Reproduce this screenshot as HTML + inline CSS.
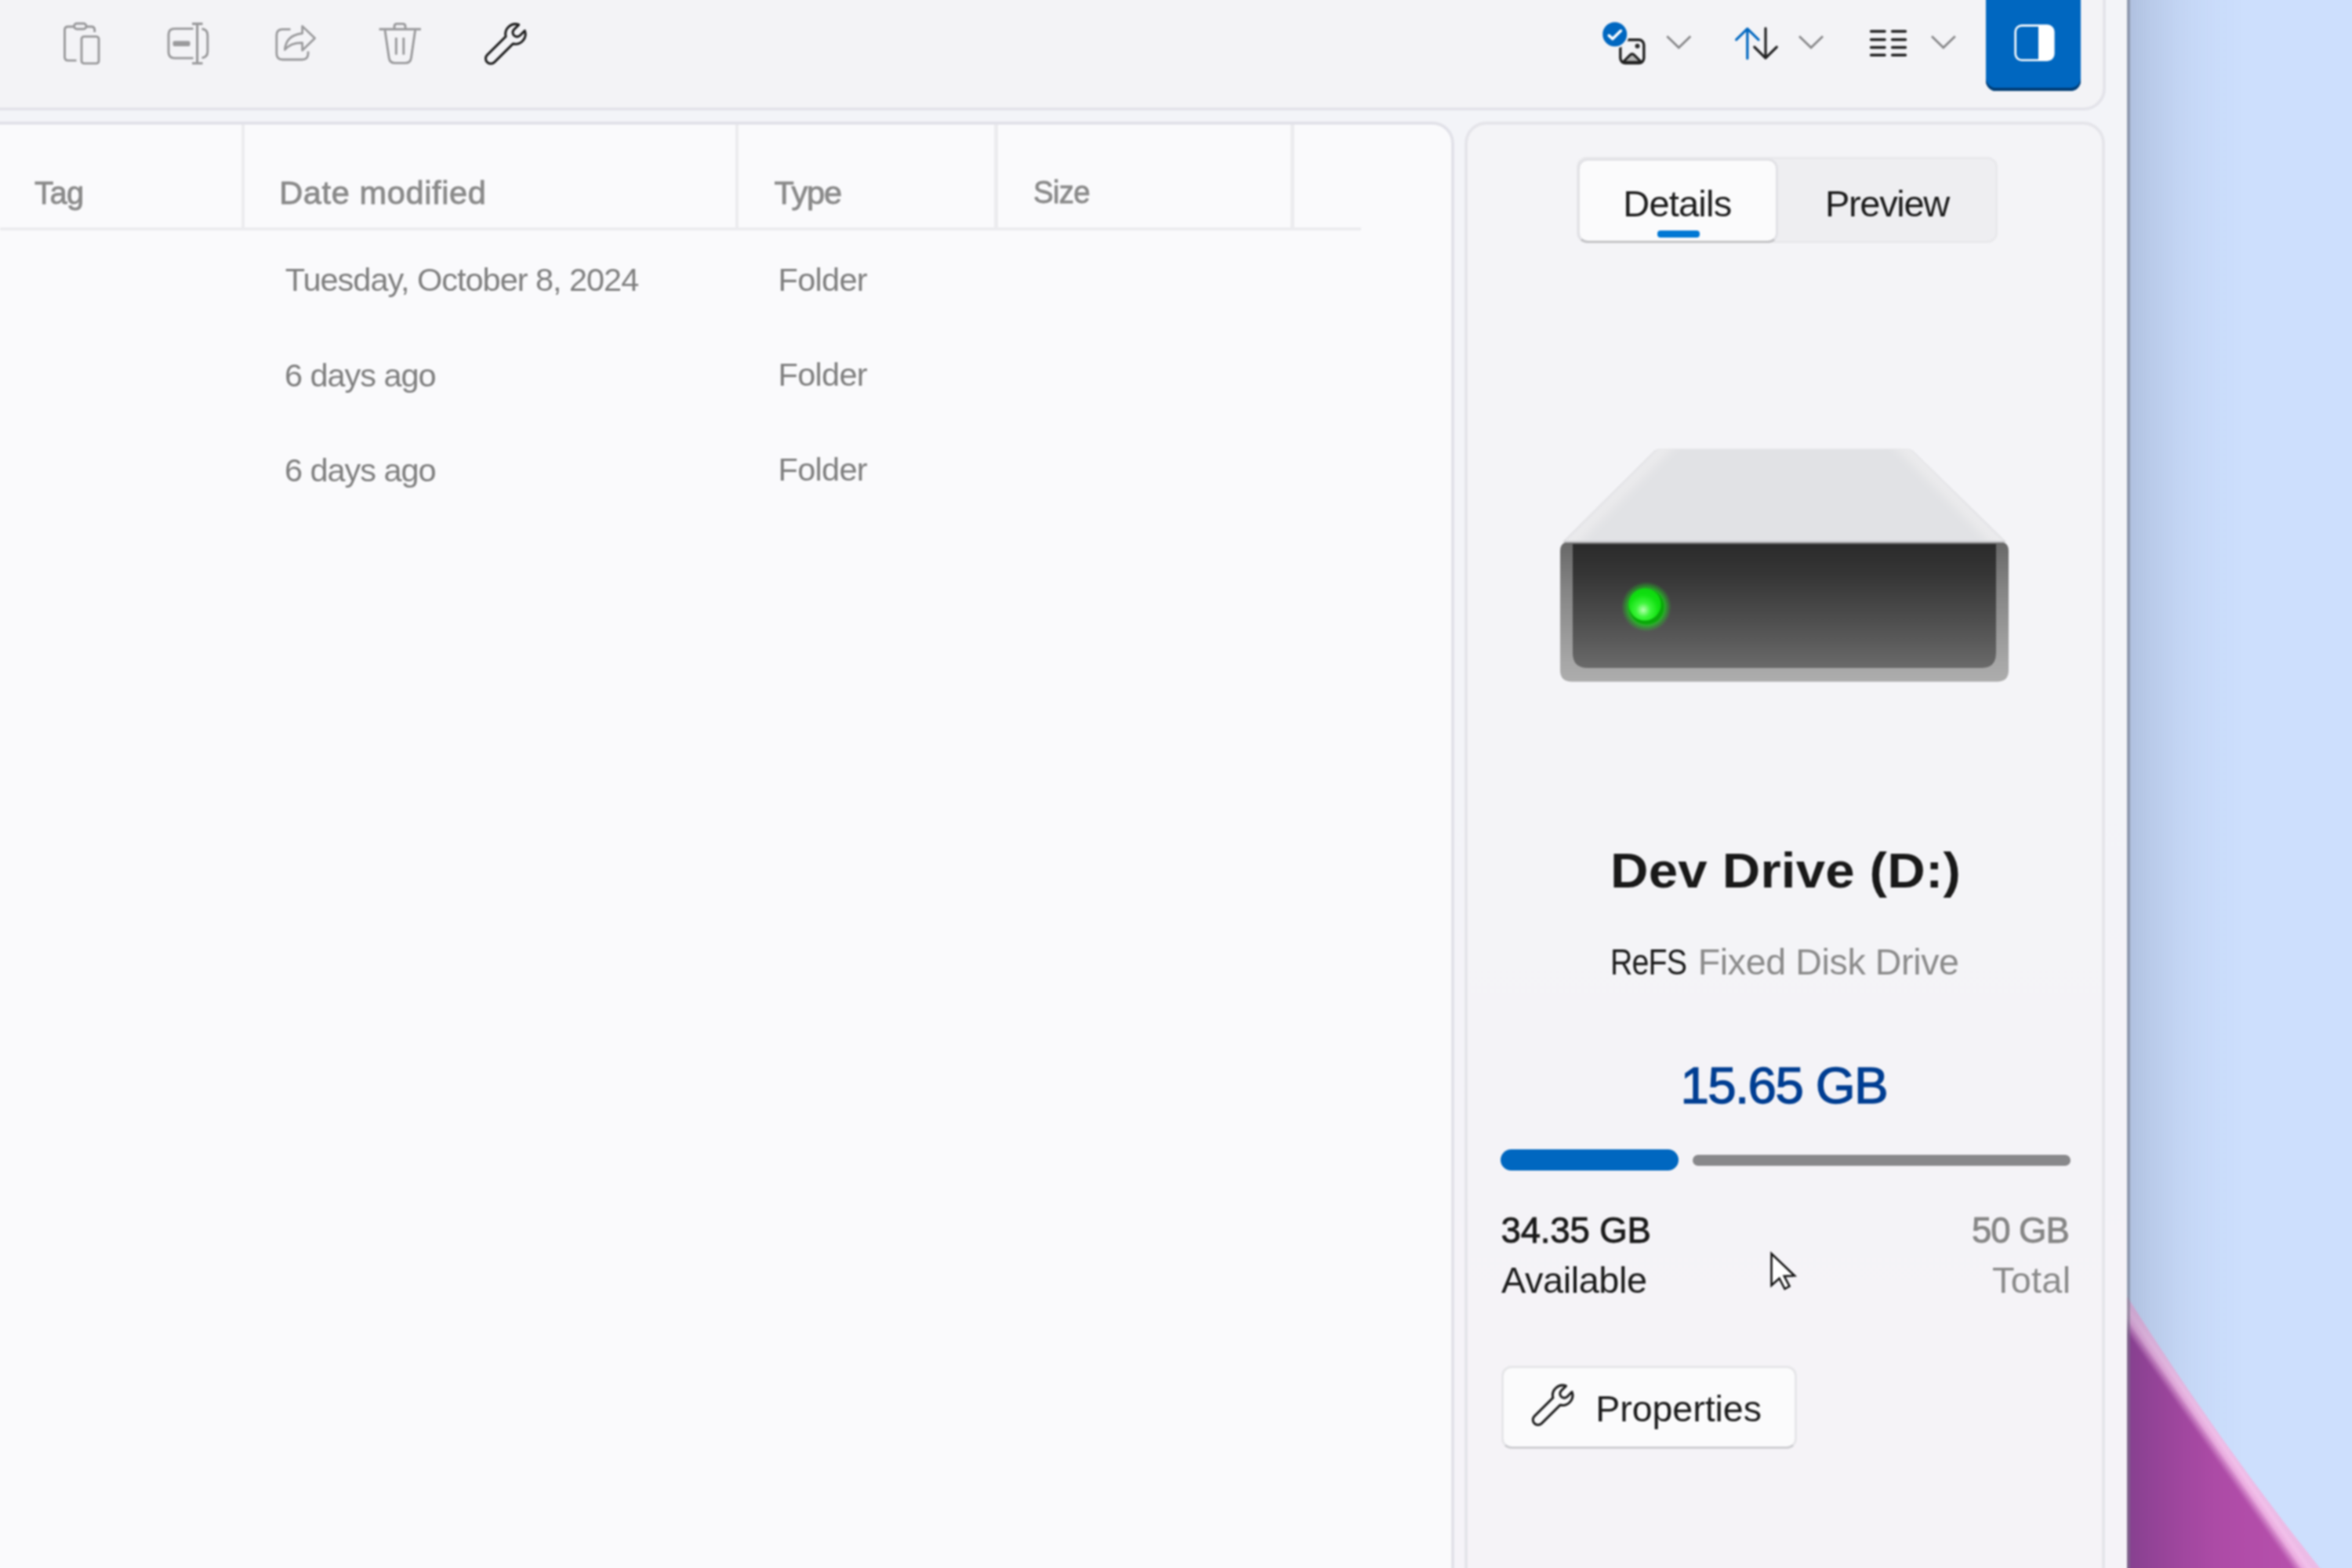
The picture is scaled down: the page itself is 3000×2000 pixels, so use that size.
<!DOCTYPE html>
<html lang="en">
<head>
<meta charset="utf-8">
<title>Files - Dev Drive (D:)</title>
<style>
*{box-sizing:border-box;margin:0;padding:0}
html,body{width:3000px;height:2000px;overflow:hidden}
body{position:relative;background:#cddffd;font-family:"Liberation Sans",sans-serif;color:#1a1a1a}
#stage{position:absolute;left:0;top:0;width:3000px;height:2000px;filter:blur(.8px)}
.abs{position:absolute}
.t{position:absolute;white-space:nowrap;line-height:1}
/* wallpaper */
#wall{left:0;top:0;width:3040px;height:2040px}
/* window */
#win{left:-40px;top:-40px;width:2752.5px;height:2100px;background:linear-gradient(180deg,#f3f4f8 0%,#f3f4f8 45%,#f5f3f8 80%,#f5f3f8 100%)}
#winedge{left:2712.5px;top:-20px;width:4.2px;height:2040px;background:rgba(118,122,136,.56)}
#shadow{left:2712.5px;top:-20px;width:150px;height:2040px;background:linear-gradient(90deg,rgba(52,66,100,.20) 0%,rgba(52,66,100,.125) 20%,rgba(52,66,100,.055) 48%,rgba(52,66,100,.015) 76%,rgba(52,66,100,0) 100%)}
/* toolbar container */
#tb{left:-40px;top:-40px;width:2725.5px;height:181px;background:#f3f3f6;border:4.5px solid #e4e4ea;border-radius:0 0 28px 0}
/* main list panel */
#main{left:-40px;top:154.5px;width:1894.5px;height:1900px;background:#fafafc;border:4.5px solid #e2e2e9;border-radius:0 28px 0 0}
/* details panel */
#side{left:1867.8px;top:154.5px;width:817.7px;height:1900px;background:linear-gradient(180deg,#f4f4f7 0%,#f4f4f7 50%,#f5f3f7 85%);border:4.5px solid #e5e5ea;border-radius:28px 28px 0 0}
.vline{position:absolute;top:159px;height:134.5px;width:4.5px;background:#ececef}
#hline{left:0;top:289.5px;width:1736px;height:4.5px;background:#ececef}
.hd{color:#8a8a8a;font-size:41.5px;-webkit-text-stroke:.9px #8a8a8a}
.rw{color:#7f7f7f;font-size:41.5px}
</style>
</head>
<body>
<div id="stage">
<svg id="wall" class="abs" viewBox="0 0 3040 2040">
  <defs>
    <linearGradient id="pg" x1="2713" y1="0" x2="2960" y2="0" gradientUnits="userSpaceOnUse">
      <stop offset="0" stop-color="#9a409a"/><stop offset=".45" stop-color="#ae4ba7"/><stop offset="1" stop-color="#b951ad"/>
    </linearGradient>
    <linearGradient id="pk" x1="2835" y1="1835" x2="2816" y2="1848.3" gradientUnits="userSpaceOnUse">
      <stop offset="0" stop-color="#ecbbe6" stop-opacity="1"/><stop offset=".22" stop-color="#f2c0ea" stop-opacity="1"/><stop offset=".5" stop-color="#eaabdf" stop-opacity="1"/><stop offset=".78" stop-color="#d184c8" stop-opacity=".6"/><stop offset="1" stop-color="#c06ab9" stop-opacity="0"/>
    </linearGradient>
  </defs>
  <path d="M2700 1636.9 L2712.5 1656.5 Q2829.25 1841.75 2959 2004 L2990 2044 L2700 2044 Z" fill="url(#pg)"/>
  <path d="M2700 1632.9 L2712.5 1652.5 Q2829.25 1837.75 2959 2000 L2990 2040 L2700 2040 Z" fill="url(#pk)"/>
</svg>
<div id="shadow" class="abs"></div>
<div id="winedge" class="abs"></div>
<div id="win" class="abs"></div>
<div id="tb" class="abs"></div>
<div id="main" class="abs"></div>
<div id="side" class="abs"></div>

<!-- column header lines -->
<div class="vline" style="left:307.5px"></div>
<div class="vline" style="left:937.5px"></div>
<div class="vline" style="left:1268px"></div>
<div class="vline" style="left:1646px"></div>
<div id="hline" class="abs"></div>

<!-- column headers -->
<span class="t hd" id="h1" style="left:44.00px;top:225.00px;letter-spacing:-0.500px;transform:scaleX(0.9579);transform-origin:0 50%">Tag</span>
<span class="t hd" id="h2" style="left:356.25px;top:224.50px;letter-spacing:0.630px">Date modified</span>
<span class="t hd" id="h3" style="left:987.50px;top:225.00px;letter-spacing:-1.167px">Type</span>
<span class="t hd" id="h4" style="left:1318.00px;top:224.00px;letter-spacing:-0.800px;transform:scaleX(0.9267);transform-origin:0 50%">Size</span>

<!-- rows -->
<span class="t rw" id="r1a" style="left:363.75px;top:336.00px;letter-spacing:-1.032px">Tuesday, October 8, 2024</span>
<span class="t rw" id="r1b" style="left:992.50px;top:335.50px;letter-spacing:-0.700px">Folder</span>
<span class="t rw" id="r2a" style="left:363.00px;top:457.50px;letter-spacing:-1.056px">6 days ago</span>
<span class="t rw" id="r2b" style="left:992.50px;top:457.00px;letter-spacing:-0.700px">Folder</span>
<span class="t rw" id="r3a" style="left:363.00px;top:578.50px;letter-spacing:-1.056px">6 days ago</span>
<span class="t rw" id="r3b" style="left:992.50px;top:578.00px;letter-spacing:-0.700px">Folder</span>


<!-- segmented control -->
<div class="abs" id="seg" style="left:2010.5px;top:199.5px;width:537px;height:110.5px;background:#eeeef1;border:3.5px solid #e9e9ec;border-radius:13px"></div>
<div class="abs" id="segsel" style="left:2011.5px;top:202px;width:256px;height:107.5px;background:#fbfbfc;border:3.5px solid #e2e2e6;border-bottom-color:#c4c4c7;border-radius:13px"></div>
<div class="abs" id="segline" style="left:2114px;top:294px;width:54px;height:9px;background:#0078d4;border-radius:4px"></div>
<span class="t" id="s1" style="left:2070.25px;top:236.00px;font-size:47px;color:#1b1b1b;letter-spacing:-0.792px">Details</span>
<span class="t" id="s2" style="left:2328.00px;top:236.00px;font-size:47px;color:#1b1b1b;letter-spacing:-1.333px">Preview</span>

<!-- drive icon -->
<svg class="abs" id="drive" style="left:1960px;top:540px" width="640" height="360" viewBox="1960 540 640 360">
  <defs>
    <linearGradient id="dTop" x1="1990" y1="0" x2="2562" y2="0" gradientUnits="userSpaceOnUse">
      <stop offset="0" stop-color="#f4f4f5"/><stop offset=".10" stop-color="#e9e9eb"/><stop offset=".2" stop-color="#e1e2e5"/><stop offset=".8" stop-color="#e1e2e5"/><stop offset=".90" stop-color="#e9e9eb"/><stop offset="1" stop-color="#f4f4f5"/>
    </linearGradient>
    <linearGradient id="dShell" x1="0" y1="691" x2="0" y2="870" gradientUnits="userSpaceOnUse">
      <stop offset="0" stop-color="#676767"/><stop offset=".35" stop-color="#858585"/><stop offset=".85" stop-color="#a6a6a6"/><stop offset="1" stop-color="#adadad"/>
    </linearGradient>
    <linearGradient id="dFace" x1="0" y1="694" x2="0" y2="852" gradientUnits="userSpaceOnUse">
      <stop offset="0" stop-color="#2b2b2b"/><stop offset=".25" stop-color="#363636"/><stop offset=".6" stop-color="#4d4d4d"/><stop offset="1" stop-color="#6a6a6a"/>
    </linearGradient>
    <linearGradient id="dTL" x1="2052" y1="632" x2="2072" y2="652" gradientUnits="userSpaceOnUse">
      <stop offset="0" stop-color="#e3e3e6" stop-opacity="1"/><stop offset=".18" stop-color="#ebebed" stop-opacity="1"/><stop offset=".45" stop-color="#e8e8ea" stop-opacity="1"/><stop offset="1" stop-color="#e1e2e5" stop-opacity="0"/>
    </linearGradient>
    <linearGradient id="dTR" x1="2500" y1="632" x2="2480" y2="652" gradientUnits="userSpaceOnUse">
      <stop offset="0" stop-color="#e3e3e6" stop-opacity="1"/><stop offset=".18" stop-color="#ebebed" stop-opacity="1"/><stop offset=".45" stop-color="#e8e8ea" stop-opacity="1"/><stop offset="1" stop-color="#e1e2e5" stop-opacity="0"/>
    </linearGradient>
    <radialGradient id="dLed" cx="2096" cy="778" r="26" gradientUnits="userSpaceOnUse">
      <stop offset="0" stop-color="#b6ffb0"/><stop offset=".35" stop-color="#3df53a"/><stop offset=".75" stop-color="#10e010"/><stop offset="1" stop-color="#0fd80f"/>
    </radialGradient>
    <radialGradient id="dGlow" cx="2100" cy="774" r="32" gradientUnits="userSpaceOnUse">
      <stop offset=".6" stop-color="#19e619" stop-opacity=".9"/><stop offset="1" stop-color="#19e619" stop-opacity="0"/>
    </radialGradient>
  </defs>
  <path d="M2117 572.5 L2433 572.5 Q2437.5 572.5 2441 575.8 L2559.5 691.5 L1992.5 691.5 L2109 575.8 Q2112.5 572.5 2117 572.5 Z" fill="#e1e2e5"/>
  <path d="M2117 572.5 L2276 572.5 L2276 691.5 L1992.5 691.5 L2109 575.8 Q2112.5 572.5 2117 572.5 Z" fill="url(#dTL)"/>
  <path d="M2276 572.5 L2433 572.5 Q2437.5 572.5 2441 575.8 L2559.5 691.5 L2276 691.5 Z" fill="url(#dTR)"/>
  <path d="M1990 703 Q1990 691 2002 691 L2550 691 Q2562 691 2562 703 L2562 855 Q2562 869.5 2547 869.5 L2005 869.5 Q1990 869.5 1990 855 Z" fill="url(#dShell)"/>
  <rect x="1995" y="689.8" width="562" height="2.4" fill="#c9c9cc"/>
  <path d="M2006 694 L2546 694 L2546 833 Q2546 852 2527 852 L2025 852 Q2006 852 2006 833 Z" fill="url(#dFace)"/>
  <circle cx="2100" cy="774" r="32" fill="url(#dGlow)"/>
  <circle cx="2100" cy="774" r="22.5" fill="#0aa80a"/>
  <circle cx="2098" cy="771" r="20.5" fill="url(#dLed)"/>
</svg>

<!-- title / subtitle -->
<span class="t" id="s3" style="left:2054.00px;top:1079.00px;font-size:63.5px;font-weight:700;color:#191919;letter-spacing:0.200px;transform:scaleX(1.0576);transform-origin:0 50%">Dev Drive (D:)</span>
<span class="t" id="s4a" style="left:2054.00px;top:1204.00px;font-size:46.5px;color:#1b1b1b;letter-spacing:-1.000px;transform:scaleX(0.8455);transform-origin:0 50%">ReFS</span>
<span class="t" id="s4b" style="left:2165.75px;top:1204.00px;font-size:46.5px;color:#8b8b8b;letter-spacing:-0.349px">Fixed Disk Drive</span>
<span class="t" id="s5" style="left:2143.50px;top:1351.50px;font-size:65.5px;color:#003e92;-webkit-text-stroke:1.3px #003e92;letter-spacing:-1.643px">15.65 GB</span>

<!-- bars -->
<div class="abs" id="bar1" style="left:1913.5px;top:1465.5px;width:227.5px;height:27.5px;border-radius:14px;background:#0067c0"></div>
<div class="abs" id="bar2" style="left:2159px;top:1472.5px;width:481.5px;height:14px;border-radius:7px;background:#88888b"></div>

<span class="t" id="s6" style="left:1914.50px;top:1546.50px;font-size:45.5px;color:#1a1a1a;-webkit-text-stroke:.9px #1a1a1a;letter-spacing:-0.143px">34.35 GB</span>
<span class="t" id="s7" style="left:1915.00px;top:1609.50px;font-size:46.8px;color:#1b1b1b;letter-spacing:-0.375px">Available</span>
<span class="t" id="s8" style="top:1546.50px;font-size:45.5px;color:#868686;-webkit-text-stroke:.9px #868686;left:2515.00px;letter-spacing:-1.062px">50 GB</span>
<span class="t" id="s9" style="top:1609.50px;font-size:46.8px;color:#8a8a8a;left:2541.00px;letter-spacing:0.314px">Total</span>

<!-- properties button -->
<div class="abs" id="pbtn" style="left:1914.5px;top:1741.5px;width:377px;height:106px;background:#fbfbfc;border:3.5px solid #e6e6e9;border-bottom-color:#cfcfd3;border-radius:13px"></div>
<span class="t" id="s10" style="left:2035.25px;top:1773.50px;font-size:46.5px;color:#1b1b1b;letter-spacing:-0.027px">Properties</span>

<!-- cursor -->
<svg class="abs" id="cursor" style="left:2250px;top:1588px" width="60" height="70" viewBox="2250 1588 60 70">
  <path d="M2259.5 1599 L2259.5 1639.5 L2269.5 1630.5 L2276.5 1644 L2282.5 1640.5 L2275.8 1627.8 L2289 1627.2 Z" fill="#fff" stroke="#111" stroke-width="2.6" stroke-linejoin="miter"/>
</svg>

<!--SIDE-->

<!-- toolbar icons -->
<div class="abs" id="pbtn2" style="left:2533px;top:-30px;width:121px;height:146px;background:#0067c0;border-radius:13px;box-shadow:inset 0 -4px 0 #003d75"></div>
<svg class="abs" id="tbicons" style="left:0;top:0" width="3000" height="140" viewBox="0 0 3000 140" fill="none" stroke-linecap="round" stroke-linejoin="round">
  <!-- paste -->
  <g stroke="#99999b" stroke-width="2.9" stroke-linecap="butt">
    <path d="M120.7 41 V38.3 Q120.7 34 116.4 34 H110.5 M93.5 34 H86.8 Q82.5 34 82.5 38.3 V72.8 Q82.5 77.1 86.8 77.1 H97.5"/>
    <rect x="94.5" y="30" width="15.5" height="7" rx="3.5"/>
    <rect x="104" y="46.6" width="22" height="34.3" rx="3.2"/>
  </g>
  <!-- rename -->
  <g stroke="#99999b" stroke-width="2.9" stroke-linecap="butt">
    <path d="M246.5 36.6 H222.5 Q215 36.6 215 44.1 V66.6 Q215 74.1 222.5 74.1 H246.5"/>
    <path d="M257.5 36.8 Q264.8 37.8 264.8 45 V65.7 Q264.8 72.9 257.5 73.9"/>
    <path d="M251.6 30.4 V80.8 M245 30.4 H258.5 M245 80.8 H258.5" stroke-width="3.1"/>
    <rect x="220.5" y="52.3" width="22" height="6.6" rx="2" fill="#9b9b9d" stroke="none"/>
  </g>
  <!-- share -->
  <g stroke="#99999b" stroke-width="2.8" stroke-linecap="butt">
    <path d="M370.5 37.3 H360.5 Q352.8 37.3 352.8 45 V68.3 Q352.8 76 360.5 76 H385.3 Q393 76 393 68.3 V65.5"/>
    <path d="M385.6 33.4 L401.6 48.8 L385.6 64.2 V54.6 Q371 54.2 363.3 63.4 Q365 44.6 385.6 42.6 Z" stroke-width="2.7"/>
  </g>
  <!-- delete -->
  <g stroke="#99999b" stroke-width="2.9" stroke-linecap="butt">
    <path d="M483.6 37.2 H536.9"/>
    <path d="M503 36.5 V33.6 Q503 30.4 506.2 30.4 H513.8 Q517 30.4 517 33.6 V36.5"/>
    <path d="M491 38.5 L496.2 74 Q497.2 80.4 503.6 80.4 H517 Q523.4 80.4 524.4 74 L529.6 38.5"/>
    <path d="M505.3 48 V69.8 M514.8 48 V69.8"/>
  </g>
  <!-- properties wrench -->
  <path id="wr" d="M661.71 31.55 A12.7 12.7 0 0 0 645.1 46.61 L621.4 70.2 A6.5 6.5 0 0 0 621.4 79.4 A6.5 6.5 0 0 0 630.6 79.4 L654.29 55.8 A12.7 12.7 0 0 0 669.35 39.19 L663.27 45.27 A5.4 5.4 0 0 1 655.63 45.27 A5.4 5.4 0 0 1 655.63 37.63 Z" stroke="#1f1f1f" stroke-width="3.1"/>
  <!-- selection options: image + badge -->
  <g stroke="#222" stroke-width="3.4">
    <rect x="2066.8" y="50.8" width="30" height="29.8" rx="6.5"/>
    <path d="M2070 79.3 L2079.4 69.9 Q2081.8 67.9 2084.2 69.9 L2093.6 79.3 Z" fill="#b4b4b4" stroke-width="3.2"/>
    <circle cx="2088.5" cy="58.8" r="3" fill="#2e2e2e" stroke="none"/>
  </g>
  <circle cx="2059.7" cy="43.7" r="18.2" fill="#f3f3f6" stroke="none"/>
  <circle cx="2059.7" cy="43.7" r="15.5" fill="#0067c0" stroke="none"/>
  <path d="M2052.3 45.3 L2057 49.6 L2067.3 39.3" stroke="#fff" stroke-width="3.6"/>
  <!-- chevrons -->
  <g stroke="#868688" stroke-width="2.7" stroke-linecap="butt" stroke-linejoin="miter">
    <path d="M2126.3 46.3 L2141.3 60.8 L2156.3 46.3"/>
    <path d="M2295 46.3 L2310 60.8 L2325 46.3"/>
    <path d="M2464 46.3 L2478.8 60.8 L2493.8 46.3"/>
  </g>
  <!-- sort -->
  <path d="M2228.8 37 V74.6 M2214.6 50.6 L2228.8 36.6 L2243 50.6" stroke="#0067c0" stroke-width="3.2"/>
  <path d="M2252 36.2 V74 M2237.8 60 L2252 74.2 L2266.2 60" stroke="#222" stroke-width="3.2"/>
  <!-- layout -->
  <path d="M2386.6 40.1 H2404 M2386.6 50.5 H2404 M2386.6 60.6 H2404 M2386.6 70.3 H2404 M2413.6 40.1 H2430.4 M2413.6 50.5 H2430.4 M2413.6 60.6 H2430.4 M2413.6 70.3 H2430.4" stroke="#1f1f1f" stroke-width="3.5"/>
  <!-- toggle details pane icon -->
  <path d="M2600 32.9 H2611 Q2619 32.9 2619 40.9 V68.4 Q2619 76.4 2611 76.4 H2600 Z" fill="#fff" stroke="none"/>
  <rect x="2570.7" y="32.6" width="48.6" height="44.1" rx="8" stroke="#fff" stroke-width="2.6"/>
</svg>
<!-- properties button wrench -->
<svg class="abs" id="pwr" style="left:1940px;top:1750px" width="90" height="90" viewBox="604.25 13.75 90 90" fill="none" stroke-linecap="round" stroke-linejoin="round">
  <path d="M661.71 31.55 A12.7 12.7 0 0 0 645.1 46.61 L621.4 70.2 A6.5 6.5 0 0 0 621.4 79.4 A6.5 6.5 0 0 0 630.6 79.4 L654.29 55.8 A12.7 12.7 0 0 0 669.35 39.19 L663.27 45.27 A5.4 5.4 0 0 1 655.63 45.27 A5.4 5.4 0 0 1 655.63 37.63 Z" stroke="#1f1f1f" stroke-width="3.1"/>
</svg>

<!--ICONS-->
</div>
</body>
</html>
